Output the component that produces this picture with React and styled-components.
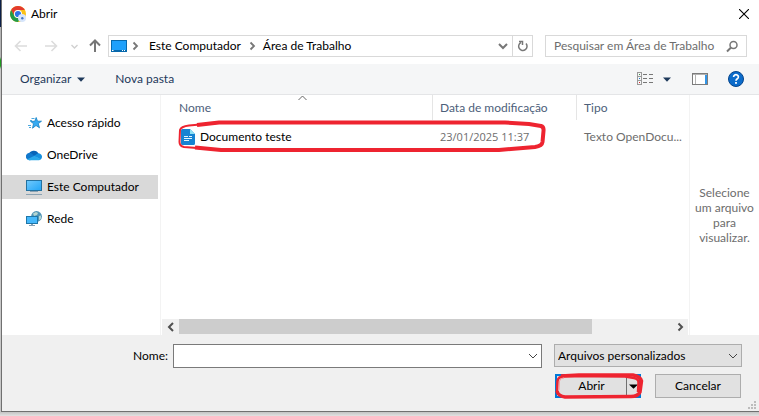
import React from "react";
import styled, { createGlobalStyle } from "styled-components";

const colors = {
  text: "#000000",
  muted: "#6d6d6d",
  header: "#4c607a",
  toolbar: "#1e395b",
  line: "#d9d9d9",
  softLine: "#f3f3f3",
  panel: "#f0f0f0",
  red: "#ee2430",
};

const GlobalStyle = createGlobalStyle`
  * {
    box-sizing: border-box;
  }
  body {
    margin: 0;
    background: #e4e4e4;
  }
  body, button, input, select {
    font-family: Lato, "Open Sans", sans-serif;
    font-size: 12px;
    line-height: 16px;
    color: ${colors.text};
  }
  svg {
    flex: none;
  }
`;

const Backdrop = styled.main`
  display: flex;
  min-height: 100vh;
  padding: 0 0 4px 1px;
  background: linear-gradient(
    #0b1f47 0 27px,
    #b4b4b4 27px 57px,
    #1f9a1f 60px 66px,
    #c8c8c8 69px 400px,
    #c4c4c4 412px,
    #e2e2e2 416px
  );
`;

const Dialog = styled.section`
  flex: 1;
  min-width: 0;
  display: flex;
  flex-direction: column;
  background: #ffffff;
  border-left: 1px solid #707070;
  border-bottom: 1px solid #707070;
`;

const PlainButton = styled.button`
  display: flex;
  align-items: center;
  justify-content: center;
  flex: none;
  padding: 0;
  border: 0;
  background: none;
  color: inherit;
  width: ${(p) => (p.$width ? `${p.$width}px` : "auto")};
`;

const TitleBar = styled.header`
  display: flex;
  align-items: center;
  gap: 5px;
  height: 28px;
  padding: 0 10px 0 8px;
`;

const Title = styled.h1`
  flex: 1;
  margin: 0;
  font-size: 12px;
  font-weight: 400;
`;

const NavBar = styled.div`
  display: flex;
  align-items: center;
  height: 36px;
  padding: 0 12px 0 4px;
`;

const AddressBar = styled.nav`
  flex: 1;
  display: flex;
  align-items: stretch;
  height: 22px;
  margin: 0 12px 0 1px;
  padding-left: 2px;
  border: 1px solid ${colors.line};
`;

const Crumbs = styled.div`
  flex: 1;
  display: flex;
  align-items: center;
`;

const Crumb = styled(PlainButton)`
  padding: 0 6px;
`;

const Refresh = styled(PlainButton)`
  border-left: 1px solid ${colors.line};
`;

const SearchBox = styled.label`
  display: flex;
  align-items: center;
  width: 202px;
  height: 22px;
  padding: 0 8px;
  border: 1px solid ${colors.line};
`;

const SearchInput = styled.input`
  flex: 1;
  min-width: 0;
  padding: 0;
  border: 0;
  outline: 0;
  background: none;

  &::placeholder {
    color: ${colors.muted};
    opacity: 1;
  }
`;

const Toolbar = styled.div`
  display: flex;
  align-items: center;
  height: 31px;
  padding: 0 15px 0 18px;
  background: #f5f6f7;
  border-bottom: 1px solid #e4e5e7;
  color: ${colors.toolbar};
`;

const ToolButton = styled(PlainButton)`
  gap: ${(p) => p.$gap || 6}px;
  margin-right: ${(p) => p.$after || 0}px;
`;

const Spacer = styled.div`
  flex: 1;
`;

const Content = styled.div`
  flex: 1;
  display: flex;
  min-height: 240px;
`;

const Sidebar = styled.ul`
  width: 159px;
  margin: 0;
  padding: 16px 2px 0 0;
  border-right: 1px solid ${colors.softLine};
  list-style: none;
`;

const Place = styled.a`
  display: flex;
  align-items: center;
  gap: 5px;
  height: 24px;
  margin-bottom: 8px;
  padding-left: 24px;
  color: inherit;
  text-decoration: none;
  background: ${(p) => (p.$active ? "#d9d9d9" : "none")};
`;

const FileArea = styled.div`
  position: relative;
  flex: 1;
  min-width: 0;
  display: flex;
  flex-direction: column;
`;

const FileTable = styled.table`
  width: calc(100% - 11px);
  margin-left: 11px;
  table-layout: fixed;
  border-collapse: separate;
  border-spacing: 0;
`;

const HeadCell = styled.th`
  position: relative;
  width: ${(p) => (p.$width ? `${p.$width}px` : "auto")};
  height: 25px;
  padding: 0 7px;
  border-right: ${(p) => (p.$last ? 0 : 1)}px solid #e5e5e5;
  color: ${colors.header};
  font-weight: 400;
  text-align: left;
`;

const SortMark = styled.svg`
  position: absolute;
  top: 0;
  left: 50%;
  margin-left: -4px;
`;

const Cell = styled.td`
  height: 33px;
  padding: 0 7px;
  color: ${(p) => (p.$main ? colors.text : colors.muted)};
  white-space: nowrap;
`;

const FileName = styled.span`
  display: flex;
  align-items: center;
  gap: 5px;
  padding-left: 2px;
`;

const DateText = styled.time`
  font-family: "Open Sans", sans-serif;
  font-size: 11px;
`;

const RowMarker = styled.svg`
  position: absolute;
  top: 24px;
  left: 16px;
  width: calc(100% - 158px);
  height: 34px;
  pointer-events: none;
`;

const ScrollBar = styled.div`
  display: flex;
  height: 16px;
  margin: auto 1px 0 1px;
  background: ${colors.panel};
`;

const ScrollTrack = styled.div`
  flex: 1;
  height: 15px;
`;

const ScrollThumb = styled.div`
  width: 84%;
  height: 100%;
  background: #cdcdcd;
`;

const Preview = styled.aside`
  display: flex;
  align-items: center;
  justify-content: center;
  width: 70px;
  border-left: 1px solid ${colors.softLine};
  color: ${colors.muted};
  line-height: 15px;
  text-align: center;
`;

const Footer = styled.form`
  display: flex;
  flex-direction: column;
  gap: 6px;
  padding: 9px 17px 13px 0;
  background: ${colors.panel};
`;

const FieldRow = styled.div`
  display: flex;
  align-items: flex-start;
`;

const FieldLabel = styled.label`
  width: 171px;
  padding-right: 5px;
  line-height: 24px;
  text-align: right;
`;

const NameBox = styled.div`
  flex: 1;
  display: flex;
  height: 24px;
  margin-right: 12px;
  background: #ffffff;
  border: 1px solid #7a7a7a;
`;

const NameInput = styled.input`
  flex: 1;
  min-width: 0;
  padding: 0 3px;
  border: 0;
  outline: 0;
`;

const TypeBox = styled.div`
  position: relative;
  width: 188px;
`;

const TypeSelect = styled.select`
  display: block;
  width: 100%;
  height: 23px;
  padding: 0 20px 0 3px;
  appearance: none;
  background: #e1e1e1;
  border: 1px solid #adadad;
  border-radius: 0;
`;

const TypeArrow = styled.svg`
  position: absolute;
  top: 8px;
  right: 4px;
  pointer-events: none;
`;

const ActionRow = styled.div`
  display: flex;
  justify-content: flex-end;
  gap: 14px;
  padding-right: 1px;
`;

const SplitButton = styled.div`
  position: relative;
  display: flex;
  width: 86px;
  height: 24px;
  background: #e1e1e1;
  border: 2px solid #0078d7;
`;

const OpenButton = styled(PlainButton)`
  flex: 1;
`;

const OpenMenuButton = styled(PlainButton)`
  border-left: 1px solid #707070;
`;

const ButtonMarker = styled.svg`
  position: absolute;
  top: -4px;
  left: -4px;
  pointer-events: none;
`;

const CancelButton = styled.button`
  width: 86px;
  height: 24px;
  padding: 0;
  background: #e1e1e1;
  border: 1px solid #adadad;
`;

const CancelWrap = styled.div`
  position: relative;
`;

const ResizeGrip = styled.svg`
  position: absolute;
  right: -15px;
  bottom: -11px;
`;

const Chevron = ({ color = "#444", dir = "down", width = 1 }) => {
  const shapes = {
    down: "M1 3l4 4 4-4",
    right: "M3.5 1.5l3.5 3.5-3.5 3.5",
    left: "M7 1L3 5l4 4",
  };
  return (
    <svg width="10" height="10" viewBox="0 0 10 10" fill="none">
      <path d={shapes[dir]} stroke={color} strokeWidth={width} />
    </svg>
  );
};

const Triangle = ({ color = "#1e395b", size = 8 }) => (
  <svg width={size} height="5" viewBox="0 0 8 5" preserveAspectRatio="none">
    <path d="M0 0.5h8L4 4.8z" fill={color} />
  </svg>
);

const Arrow = ({ angle = 0, color = "#dcdcdc", width = 1.6 }) => (
  <svg width="14" height="14" viewBox="0 0 14 14" fill="none">
    <path
      d="M13 7H1.5M6.500 2L1.500 7l5 5"
      stroke={color}
      strokeWidth={width}
      transform={`rotate(${angle} 7 7)`}
    />
  </svg>
);

const ChromeIcon = () => (
  <svg width="16" height="16" viewBox="0 0 16 16">
    <circle cx="8" cy="8" r="8" fill="#fbc116" />
    <path d="M1.1 4A8 8 0 0 1 14.9 4H8a4 4 0 0 0-3.5 6z" fill="#e33b2e" />
    <path d="M1.1 4A8 8 0 0 0 8 16l3.5-6a4 4 0 0 1-7 0z" fill="#229b48" />
    <circle cx="8" cy="8" r="4" fill="#fff" />
    <circle cx="8" cy="8" r="3.1" fill="#2f74e5" />
    <circle cx="12" cy="12" r="4" fill="#d6e5fb" />
    <circle cx="12.3" cy="12.2" r="1.2" fill="#4276c8" />
  </svg>
);

const DesktopIcon = () => (
  <svg width="16" height="12" viewBox="0 0 16 12">
    <rect x="0.5" y="0.5" width="15" height="11" fill="#1ea0fb" stroke="#0769ad" />
    <path d="M1 10.5h14" stroke="#0769ad" />
    <path d="M1 10.5h1.5M11 10.5h1M13 10.5h1" stroke="#fff" />
  </svg>
);

const StarIcon = () => (
  <svg width="16" height="16" viewBox="0 0 16 16">
    <path
      d="M10.200 2.500l1.300 3.700h4l-3.200 2.400 1.200 4.200-3.500-2.300-3.500 2.700 1-4.500-3-2.400h4.200z"
      fill="#35aaf2"
      stroke="#1580c4"
      strokeWidth="0.8"
    />
    <path d="M5.500 3.500h3M4 5.500h2M2 10.500h3M3 12.500h2" stroke="#4ba8df" />
  </svg>
);

const CloudIcon = () => (
  <svg width="16" height="16" viewBox="0 0 16 16">
    <path d="M2.7 8A5.2 5.2 0 0 1 12.6 6.8L9 11z" fill="#0864b8" />
    <path d="M3.8 13.2A3.7 3.7 0 1 1 6 6.7l5.5 5z" fill="#1178cc" />
    <path d="M8 9l3-2.2a3.4 3.4 0 0 1 5 3.2 3.2 3.2 0 0 1-1.5 2.600z" fill="#1690df" />
    <path d="M1.2 12.2L8.5 8.7l6.3 3.6c-.5.6-1.2.9-2 .9h-9c-1 0-2-.4-2.6-1z" fill="#29a8ea" />
  </svg>
);

const ComputerIcon = () => (
  <svg width="16" height="16" viewBox="0 0 16 16">
    <defs>
      <linearGradient id="screen" x1="0" y1="0" x2="1" y2="1">
        <stop offset="0" stopColor="#72cafd" />
        <stop offset="1" stopColor="#20a4f6" />
      </linearGradient>
    </defs>
    <rect x="0.5" y="1.5" width="15" height="10" fill="url(#screen)" stroke="#24719f" />
    <path d="M4 12.5h8M0 15.5h16" stroke="#8ba2b2" />
  </svg>
);

const NetworkIcon = () => (
  <svg width="16" height="16" viewBox="0 0 16 16">
    <circle cx="10.5" cy="5.5" r="5.4" fill="#4f93b5" />
    <path d="M7 2.5l3-1.5 2 1-1 2-3 1zM13 5l2-.5v3l-2 2z" fill="#b5d5d0" />
    <rect x="0.5" y="5.500" width="11" height="7" fill="#45b8fb" stroke="#1e76a8" />
    <path d="M5 13.500h2M3 14.500h6" stroke="#83a0b4" />
  </svg>
);

const DocumentIcon = () => (
  <svg width="14" height="16" viewBox="0 0 14 16">
    <path d="M1.500 0H9l5 5v9.500a1.500 1.500 0 0 1-1.500 1.500h-11A1.500 1.500 0 0 1 0 14.500v-13A1.500 1.500 0 0 1 1.500 0z" fill="#1683d2" />
    <path d="M9 0l5 5H9z" fill="#8fe1f4" />
    <path d="M3 7.500h4M8 7.500h3M3 9.500h8M3 11.500h5" stroke="#e2f5fc" />
  </svg>
);

const ViewIcon = () => (
  <svg width="16" height="14" viewBox="0 0 16 14" fill="none">
    <rect x="0.5" y="0.5" width="4" height="12" stroke="#9a9a9a" />
    <path d="M1 4.5h3M1 8.5h3" stroke="#9a9a9a" />
    <path d="M2 2.5h1" stroke="#3b9348" />
    <path d="M2 6.5h1" stroke="#2178ca" />
    <path d="M2 10.5h1" stroke="#d22" />
    <path d="M6 2.5h4M12 2.5h4M6 6.5h4M12 6.5h4M6 10.5h4M12 10.5h4" stroke="#777" />
  </svg>
);

const PaneIcon = () => (
  <svg width="16" height="12" viewBox="0 0 16 12" fill="none">
    <rect x="0.5" y="0.5" width="15" height="11" fill="#fff" stroke="#7c7c7c" />
    <path d="M1 1.5h14M3.5 2v9" stroke="#b3b3b3" />
    <rect x="13" y="2" width="2" height="9" fill="#3195e8" />
  </svg>
);

const HelpIcon = () => (
  <svg width="16" height="16" viewBox="0 0 16 16">
    <circle cx="8" cy="8" r="7.5" fill="#0c6ccb" stroke="#06458c" />
    <path
      d="M5.6 6a2.4 2.2 0 1 1 3.7 1.8C8.4 8.4 8 8.7 8 9.8"
      fill="none"
      stroke="#fff"
      strokeWidth="1.7"
    />
    <rect x="7.1" y="11" width="1.8" height="1.8" fill="#fff" />
  </svg>
);

const places = [
  { name: "Acesso rápido", icon: <StarIcon /> },
  { name: "OneDrive", icon: <CloudIcon /> },
  { name: "Este Computador", icon: <ComputerIcon />, active: true },
  { name: "Rede", icon: <NetworkIcon /> },
];

const files = [
  {
    name: "Documento teste",
    date: "23/01/2025 11:37",
    type: "Texto OpenDocu...",
  },
];

const App = () => {
  return (
    <Backdrop>
      <GlobalStyle />
      <Dialog aria-label="Abrir">
        <TitleBar>
          <ChromeIcon />
          <Title>Abrir</Title>
          <PlainButton aria-label="Fechar">
            <svg width="10" height="10" viewBox="0 0 10 10">
              <path d="M0 0l10 10M10 0L0 10" stroke="#000" strokeWidth="1.1" />
            </svg>
          </PlainButton>
        </TitleBar>

        <NavBar>
          <PlainButton $width={30} aria-label="Voltar">
            <Arrow />
          </PlainButton>
          <PlainButton $width={30} aria-label="Avançar">
            <Arrow angle={180} />
          </PlainButton>
          <PlainButton $width={17} aria-label="Locais recentes">
            <svg width="7" height="5" viewBox="0 0 7 5" fill="none">
              <path d="M0.5 1l3 3 3-3" stroke="#d0d0d0" strokeWidth="1.4" />
            </svg>
          </PlainButton>
          <PlainButton $width={24} aria-label="Acima">
            <Arrow angle={90} color="#777" width={2} />
          </PlainButton>
          <AddressBar aria-label="Caminho">
            <Crumbs>
              <DesktopIcon />
              <PlainButton $width={16} aria-label="Expandir">
                <Chevron dir="right" color="#777" width={1.8} />
              </PlainButton>
              <Crumb>Este Computador</Crumb>
              <Chevron dir="right" color="#777" width={1.8} />
              <Crumb>Área de Trabalho</Crumb>
            </Crumbs>
            <PlainButton $width={18} aria-label="Locais anteriores">
              <Chevron color="#777" width={2} />
            </PlainButton>
            <Refresh $width={20} aria-label="Atualizar">
              <svg width="12" height="12" viewBox="0 0 12 12" fill="none">
                <path d="M4 2.5A4.2 4.2 0 1 0 9 3.5" stroke="#777" strokeWidth="1.5" />
                <path d="M2 1.5h3.5v3.5" stroke="#777" strokeWidth="1.5" />
              </svg>
            </Refresh>
          </AddressBar>
          <SearchBox>
            <SearchInput
              aria-label="Pesquisar"
              placeholder="Pesquisar em Área de Trabalho"
            />
            <svg width="12" height="13" viewBox="0 0 12 13" fill="none">
              <circle cx="7.5" cy="5" r="3.5" stroke="#777" strokeWidth="1.5" />
              <path d="M5 7.5L1 11.5" stroke="#777" strokeWidth="2" />
            </svg>
          </SearchBox>
        </NavBar>

        <Toolbar>
          <ToolButton $after={30}>
            Organizar <Triangle />
          </ToolButton>
          <ToolButton>Nova pasta</ToolButton>
          <Spacer />
          <ToolButton $gap={10} $after={21} aria-label="Alterar modo de exibição">
            <ViewIcon />
            <Triangle />
          </ToolButton>
          <ToolButton $after={20} aria-label="Painel de visualização">
            <PaneIcon />
          </ToolButton>
          <ToolButton aria-label="Ajuda">
            <HelpIcon />
          </ToolButton>
        </Toolbar>

        <Content>
          <Sidebar>
            {places.map((place) => (
              <li key={place.name}>
                <Place href="#" $active={place.active}>
                  {place.icon}
                  {place.name}
                </Place>
              </li>
            ))}
          </Sidebar>

          <FileArea>
            <FileTable>
              <thead>
                <tr>
                  <HeadCell>
                    Nome
                    <SortMark width="9" height="6" viewBox="0 0 9 6" fill="none">
                      <path d="M0.5 5l4-4 4 4" stroke="#666" />
                    </SortMark>
                  </HeadCell>
                  <HeadCell $width={144}>Data de modificação</HeadCell>
                  <HeadCell $width={112} $last>
                    Tipo
                  </HeadCell>
                </tr>
              </thead>
              <tbody>
                {files.map((file) => (
                  <tr key={file.name}>
                    <Cell $main>
                      <FileName>
                        <DocumentIcon />
                        {file.name}
                      </FileName>
                    </Cell>
                    <Cell>
                      <DateText>{file.date}</DateText>
                    </Cell>
                    <Cell>{file.type}</Cell>
                  </tr>
                ))}
              </tbody>
            </FileTable>
            <RowMarker viewBox="0 0 370 34" preserveAspectRatio="none" fill="none">
              <path
                d="M44 31L20 29 7 28Q2.500 27 2.500 23L3 11Q4 7.500 12 6.500L40 4"
                stroke={colors.red}
                strokeWidth="2"
              />
              <path
                d="M20 6L42 3.500H328L352 5 364 7Q367 8 366.500 12L365.500 23Q365 27 358 28L322 31H44L18 28.500"
                stroke={colors.red}
                strokeWidth="4"
                strokeLinejoin="round"
              />
            </RowMarker>
            <ScrollBar>
              <PlainButton $width={17} aria-label="Rolar para a esquerda">
                <Chevron dir="left" color="#505050" width={2} />
              </PlainButton>
              <ScrollTrack>
                <ScrollThumb />
              </ScrollTrack>
              <PlainButton $width={17} aria-label="Rolar para a direita">
                <Chevron dir="right" color="#505050" width={2} />
              </PlainButton>
            </ScrollBar>
          </FileArea>

          <Preview>Selecione um arquivo para visualizar.</Preview>
        </Content>

        <Footer onSubmit={(e) => e.preventDefault()}>
          <FieldRow>
            <FieldLabel htmlFor="file-name">Nome:</FieldLabel>
            <NameBox>
              <NameInput id="file-name" type="text" />
              <PlainButton type="button" $width={17} aria-label="Nomes recentes">
                <Chevron />
              </PlainButton>
            </NameBox>
            <TypeBox>
              <TypeSelect aria-label="Tipo de arquivo">
                <option>Arquivos personalizados</option>
              </TypeSelect>
              <TypeArrow width="10" height="8" viewBox="0 0 10 8" fill="none">
                <path d="M1 2l4 4 4-4" stroke="#444" />
              </TypeArrow>
            </TypeBox>
          </FieldRow>
          <ActionRow>
            <SplitButton>
              <OpenButton type="submit">Abrir</OpenButton>
              <OpenMenuButton type="button" $width={13} aria-label="Opções de abertura">
                <Triangle color="#000" size={9} />
              </OpenMenuButton>
              <ButtonMarker width="92" height="28" viewBox="0 0 92 28" fill="none">
                <path
                  d="M8 4L26 3H80Q87 4 88.500 9L87 20Q85 24.500 78 24.500L12 25Q5 24 4 19"
                  stroke={colors.red}
                  strokeWidth="3.5"
                />
                <path
                  d="M4 20L4.500 9Q5 4.500 12 4L72 4.500 81 6Q86 7 85.500 11L85 20"
                  stroke={colors.red}
                  strokeWidth="2.5"
                />
                <path d="M6 18L6.500 9Q7 6 11 6" stroke="#f79ba0" />
              </ButtonMarker>
            </SplitButton>
            <CancelWrap>
              <CancelButton type="button">Cancelar</CancelButton>
              <ResizeGrip width="8" height="8" viewBox="0 0 8 8" fill="#bcbcbc">
                <path d="M6 0h2v2h-2zM3 3h2v2h-2zM6 3h2v2h-2zM0 6h2v2h-2zM3 6h2v2h-2zM6 6h2v2h-2z" />
              </ResizeGrip>
            </CancelWrap>
          </ActionRow>
        </Footer>
      </Dialog>
    </Backdrop>
  );
};

export default App;
